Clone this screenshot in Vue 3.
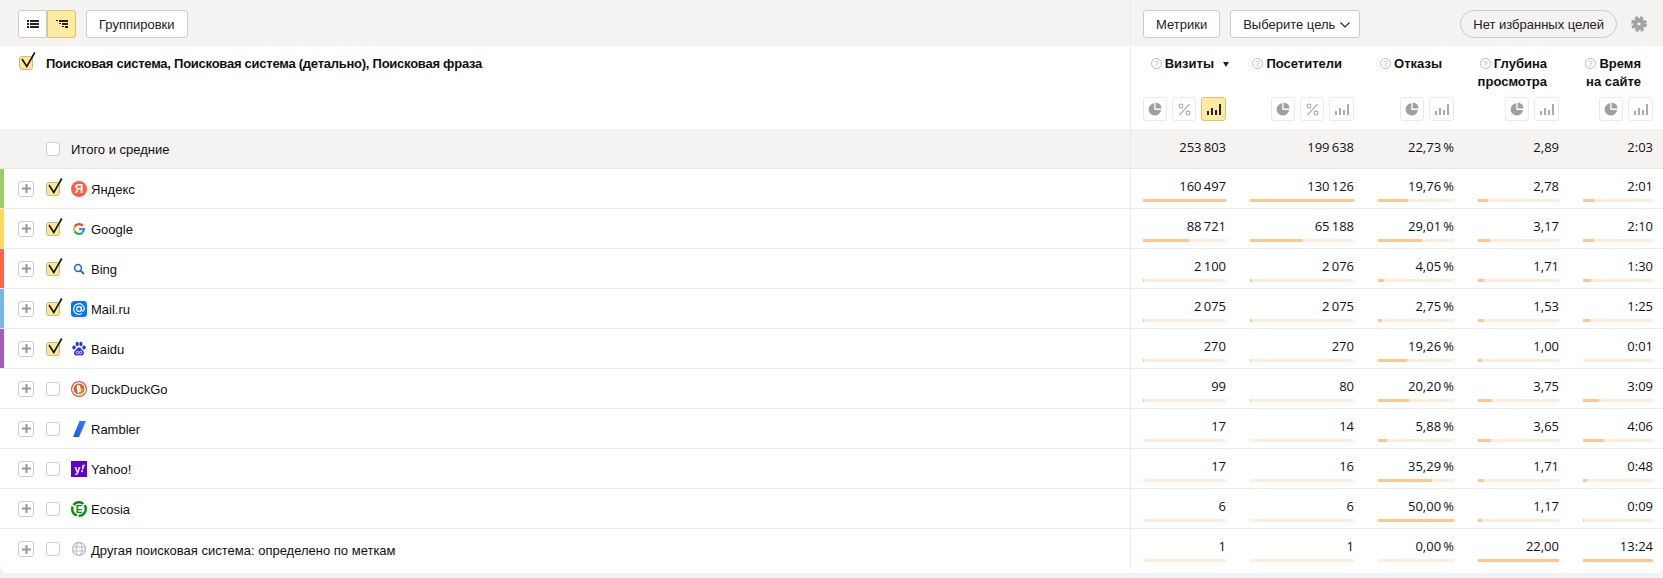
<script setup>
const columns = [
	{ title: ['Визиты'], sorted: true, buttons: ['pie', 'percent', 'bars-on'] },
	{ title: ['Посетители'], buttons: ['pie', 'percent', 'bars'] },
	{ title: ['Отказы'], buttons: ['pie', 'bars'] },
	{ title: ['Глубина', 'просмотра'], buttons: ['pie', 'bars'] },
	{ title: ['Время', 'на сайте'], buttons: ['pie', 'bars'] }
]

const totals = ['253 803', '199 638', '22,73 %', '2,89', '2:03']

const rows = [
	{ name: 'Яндекс', icon: 'yandex', color: '#9ccc65', checked: true, values: ['160 497', '130 126', '19,76 %', '2,78', '2:01'], bars: [100, 100, 39.5, 12.6, 15] },
	{ name: 'Google', icon: 'google', color: '#ffd75e', checked: true, values: ['88 721', '65 188', '29,01 %', '3,17', '2:10'], bars: [55.3, 50.1, 58, 14.4, 16.2] },
	{ name: 'Bing', icon: 'bing', color: '#ff6444', checked: true, values: ['2 100', '2 076', '4,05 %', '1,71', '1:30'], bars: [1.3, 1.6, 8.1, 7.8, 11.2] },
	{ name: 'Mail.ru', icon: 'mail', color: '#7ab5e8', checked: true, values: ['2 075', '2 075', '2,75 %', '1,53', '1:25'], bars: [1.3, 1.6, 5.5, 7, 10.6] },
	{ name: 'Baidu', icon: 'baidu', color: '#a65cbf', checked: true, values: ['270', '270', '19,26 %', '1,00', '0:01'], bars: [0.2, 0.2, 38.5, 4.5, 0.1] },
	{ name: 'DuckDuckGo', icon: 'duck', values: ['99', '80', '20,20 %', '3,75', '3:09'], bars: [0.1, 0.1, 40.4, 17, 23.5] },
	{ name: 'Rambler', icon: 'rambler', values: ['17', '14', '5,88 %', '3,65', '4:06'], bars: [0, 0, 11.8, 16.6, 30.6] },
	{ name: 'Yahoo!', icon: 'yahoo', values: ['17', '16', '35,29 %', '1,71', '0:48'], bars: [0, 0, 70.6, 7.8, 6] },
	{ name: 'Ecosia', icon: 'ecosia', values: ['6', '6', '50,00 %', '1,17', '0:09'], bars: [0, 0, 100, 5.3, 1.1] },
	{ name: 'Другая поисковая система: определено по меткам', icon: 'globe', values: ['1', '1', '0,00 %', '22,00', '13:24'], bars: [0, 0, 0, 100, 100] }
]

// числа в метрике разделены тонким пробелом
function thin(value) {
	return value.replace(' ', '\u2009')
}
</script>

<template>
	<div class="report">
		<div class="toolbar">
			<div class="toolbar-left">
				<div class="toggle">
					<button class="tbtn">
						<svg width="12" height="10" viewBox="0 0 12 10"><path d="M0 1h2v2H0zM3 1h9v2H3zM0 4h2v2H0zM3 4h9v2H3zM0 7h2v2H0zM3 7h9v2H3z" fill="#222" /></svg>
					</button>
					<button class="tbtn on">
						<svg width="12" height="10" viewBox="0 0 12 10"><path d="M0 1h2v1H0zM3 1h9v2H3zM3 4h2v1H3zM6 4h6v2H6zM6 7h2v1H6zM9 7h3v2H9z" fill="#222" /></svg>
					</button>
				</div>
				<button class="btn">Группировки</button>
			</div>
			<div class="toolbar-right">
				<button class="btn">Метрики</button>
				<button class="btn goal">
					Выберите цель
					<svg class="chevron" width="10" height="6" viewBox="0 0 10 6"><path d="M.5.5 5 5 9.500.5" fill="none" stroke="#222" stroke-width="1.100" /></svg>
				</button>
				<button class="pill">Нет избранных целей</button>
				<svg class="gear" width="16" height="16" viewBox="0 0 16 16">
					<circle cx="8" cy="8" r="6.300" fill="none" stroke="#a3a3a3" stroke-width="3.200" stroke-dasharray="3 2" />
					<circle cx="8" cy="8" r="3.800" fill="none" stroke="#a3a3a3" stroke-width="4.400" />
				</svg>
			</div>
		</div>

		<div class="grid head">
			<div class="left head-left">
				<span class="check on head-check">
					<svg class="tick" width="18" height="19" viewBox="0 0 18 19"><path d="M3 9 7.800 16.500 15.800 2.500" fill="none" stroke="#111" stroke-width="1.600" /></svg>
				</span>
				<b class="head-title">Поисковая система, Поисковая система (детально), Поисковая фраза</b>
			</div>
			<div v-for="col in columns" :key="col.title[0]" class="cell head-cell">
				<div class="label">
					<div class="label-text">
						<svg class="hint" width="11" height="11" viewBox="0 0 11 11">
							<circle cx="5.500" cy="5.500" r="5" fill="none" stroke="#bbb" />
							<text x="5.500" y="8.300" text-anchor="middle" font-size="8" fill="#aaa">?</text>
						</svg>
						<template v-for="(line, i) in col.title" :key="line"><br v-if="i > 0">{{ line }}</template>
					</div>
					<div class="sort">
						<svg v-if="col.sorted" width="6" height="5" viewBox="0 0 6 5"><path d="M0 0h6L3 5z" fill="#222" /></svg>
					</div>
				</div>
				<div class="chart-btns">
					<span v-for="b in col.buttons" :key="b" class="cbtn" :class="{ wide: b.startsWith('bars'), on: b === 'bars-on' }">
						<svg v-if="b === 'pie'" width="14" height="14" viewBox="0 0 14 14">
							<path d="M6.300 1.200A6.200 6.200 0 1 0 13 8H6.300z" fill="#a0a0a0" />
							<path d="M7.600 0.600A6 6 0 0 1 13.600 6.600H7.600z" fill="#a0a0a0" />
						</svg>
						<svg v-else-if="b === 'percent'" width="13" height="13" viewBox="0 0 13 13">
							<path d="M11.500 1 1.500 12" stroke="#999" stroke-width="1.100" />
							<circle cx="3" cy="3" r="2" fill="none" stroke="#999" />
							<circle cx="10" cy="10" r="2" fill="none" stroke="#999" />
						</svg>
						<svg v-else width="14" height="12" viewBox="0 0 14 12">
							<path d="M0 8h2v4H0zM4 5h2v7H4zM8 7h2v5H8zM12 1h2v11h-2z" :fill="b === 'bars-on' ? '#222' : '#aaa'" />
						</svg>
					</span>
				</div>
			</div>
		</div>

		<div class="grid total">
			<div class="left">
				<span class="expand-slot"></span>
				<span class="check"></span>
				<span class="name total-name">Итого и средние</span>
			</div>
			<div v-for="t in totals" :key="t" class="cell value-cell">
				<div class="value">{{ thin(t) }}</div>
			</div>
		</div>

		<div v-for="row in rows" :key="row.name" class="grid row">
			<div class="left" :style="{ borderLeftColor: row.color || 'transparent' }">
				<span class="expand">
					<svg width="9" height="9" viewBox="0 0 9 9"><path d="M3.500 0h2v3.500H9v2H5.500V9h-2V5.500H0v-2h3.500z" fill="#999" /></svg>
				</span>
				<span class="check" :class="{ on: row.checked }">
					<svg v-if="row.checked" class="tick" width="18" height="19" viewBox="0 0 18 19"><path d="M3 9 7.800 16.500 15.800 2.500" fill="none" stroke="#111" stroke-width="1.600" /></svg>
				</span>
				<svg class="favicon" width="16" height="16" viewBox="0 0 16 16">
					<template v-if="row.icon === 'yandex'">
						<circle cx="8" cy="8" r="8" fill="#fc5f45" />
						<text x="8" y="12.400" text-anchor="middle" font-size="12" font-weight="700" font-family="Liberation Sans" fill="#fff">Я</text>
					</template>
					<template v-else-if="row.icon === 'google'">
						<path d="M11.800 4.900A4.900 4.900 0 0 0 3.700 5.600" fill="none" stroke="#ea4335" stroke-width="2.200" />
						<path d="M3.700 5.600a4.900 4.900 0 0 0 0 4.800" fill="none" stroke="#fbbc05" stroke-width="2.200" />
						<path d="M3.700 10.400A4.900 4.900 0 0 0 11.500 11.400" fill="none" stroke="#34a853" stroke-width="2.200" />
						<path d="M11.500 11.400A4.900 4.900 0 0 0 12.900 8" fill="none" stroke="#4285f4" stroke-width="2.200" />
						<path d="M8 7h6v2.100H8z" fill="#4285f4" />
					</template>
					<template v-else-if="row.icon === 'bing'">
						<circle cx="7" cy="7" r="3.400" fill="none" stroke="#1a6fc4" stroke-width="1.500" />
						<path d="M9.500 9.500 13 13" stroke="#1a6fc4" stroke-width="1.800" />
					</template>
					<template v-else-if="row.icon === 'mail'">
						<rect width="16" height="16" rx="3.500" fill="#07f" />
						<circle cx="8" cy="8" r="2.400" fill="none" stroke="#fff" stroke-width="1.200" />
						<path d="M10.400 5.600v3.200c0 1.900 2.900 1.700 2.900-.8a5.300 5.300 0 1 0-2.200 4.300" fill="none" stroke="#fff" stroke-width="1.200" />
					</template>
					<template v-else-if="row.icon === 'baidu'">
						<ellipse cx="3" cy="6.500" rx="1.700" ry="2.100" fill="#2932e1" />
						<ellipse cx="6.200" cy="3" rx="1.600" ry="2.200" fill="#2932e1" />
						<ellipse cx="9.900" cy="3" rx="1.600" ry="2.200" fill="#2932e1" />
						<ellipse cx="13" cy="6.500" rx="1.700" ry="2.100" fill="#2932e1" />
						<path d="M8 6.500c-2 0-2.500 2-4 3.200-1.800 1.500-.8 5.300 2 4.800 1.300-.2 2.700-.2 4 0 2.800.5 3.800-3.300 2-4.800-1.500-1.200-2-3.200-4-3.200z" fill="#2932e1" />
						<circle cx="6.500" cy="11.500" r="1.300" fill="none" stroke="#fff" stroke-width=".8" />
						<circle cx="9.700" cy="11.500" r="1.300" fill="none" stroke="#fff" stroke-width=".8" />
					</template>
					<template v-else-if="row.icon === 'duck'">
						<circle cx="8" cy="8" r="7.400" fill="#fff" stroke="#de5833" stroke-width="1.200" />
						<circle cx="8" cy="8" r="5.400" fill="#de5833" />
						<path d="M6 4.500c2-1 3.500 0 3.500 2 0 1.500.5 3 .5 6H7C6.500 10 5 7 6 4.500z" fill="#fff" />
						<path d="M8.500 8h3.500v1.500H8.500z" fill="#fdd209" />
						<path d="M8 11h3v1.500H8z" fill="#65bc46" />
					</template>
					<template v-else-if="row.icon === 'rambler'">
						<defs>
							<linearGradient id="ramblerFill" x1="0" y1="1" x2="1" y2="0">
								<stop offset="0" stop-color="#0a5cff" />
								<stop offset="1" stop-color="#3d7bff" />
							</linearGradient>
						</defs>
						<path d="M8.500 0H15L8 16H2z" fill="url(#ramblerFill)" />
					</template>
					<template v-else-if="row.icon === 'yahoo'">
						<rect width="16" height="16" fill="#5f01d1" />
						<text x="6.500" y="12" text-anchor="middle" font-size="10.500" font-weight="700" font-family="Liberation Sans" fill="#fff">y</text>
						<path d="M11.500 4 14 3.500 12 8.500h-1.200z" fill="#fff" />
						<circle cx="11" cy="10.300" r="1" fill="#fff" />
					</template>
					<template v-else-if="row.icon === 'ecosia'">
						<circle cx="8" cy="8" r="6.800" fill="none" stroke="#0a8a12" stroke-width="2.400" stroke-dasharray="11 1.800" />
						<text x="8" y="11.600" text-anchor="middle" font-size="10" font-weight="700" font-family="Liberation Sans" fill="#0a8a12">E</text>
					</template>
					<template v-else>
						<circle cx="8" cy="8" r="6.500" fill="none" stroke="#b8bed0" stroke-width="1.300" />
						<ellipse cx="8" cy="8" rx="3" ry="6.500" fill="none" stroke="#b8bed0" stroke-width="1.100" />
						<path d="M1.500 6h13M1.500 10h13" stroke="#b8bed0" stroke-width="1.100" />
					</template>
				</svg>
				<span class="name">{{ row.name }}</span>
			</div>
			<div v-for="(v, i) in row.values" :key="i" class="cell value-cell">
				<div class="value">{{ thin(v) }}</div>
				<div class="bar">
					<div class="bar-fill" :style="{ width: row.bars[i] + '%' }"></div>
				</div>
			</div>
		</div>
	</div>
</template>

<style scoped>
.report {
	width: 1663px;
	height: 573px;
	background: #fff;
	border-radius: 0 0 8px 8px;
	font-family: "Liberation Sans", Arial, sans-serif;
	font-size: 13px;
	color: #111;
	overflow: hidden;
}

.toolbar {
	display: flex;
	height: 46px;
	background: #f4f3f1;
}

.toolbar-left {
	display: flex;
	align-items: center;
	gap: 10px;
	width: 1131px;
	padding: 2px 0 0 18px;
	box-sizing: border-box;
	border-right: 1px solid #eaeaea;
}

.toolbar-right {
	display: flex;
	flex: 1;
	align-items: center;
	gap: 10px;
	padding: 2px 16px 0 12px;
}

.btn,
.tbtn,
.pill {
	height: 28px;
	box-sizing: border-box;
	background: #fff;
	border: 1px solid #ccc;
	border-radius: 3px;
	font: 13px "Liberation Sans", Arial, sans-serif;
	color: #222;
	padding: 0 12px;
}

.goal {
	padding: 0 9px 0 12px;
}

.toggle {
	display: flex;
}

.tbtn {
	display: flex;
	align-items: center;
	justify-content: center;
	width: 29px;
	padding: 0;
	border-radius: 3px 0 0 3px;
}

.tbtn.on {
	background: #ffeba0;
	border-color: #d6c27e;
	border-radius: 0 3px 3px 0;
}

.chevron {
	margin-left: 1px;
	vertical-align: 1px;
}

.pill {
	margin-left: auto;
	background: transparent;
	border-radius: 14px;
}

.gear {
	margin-left: 4px;
}

.grid {
	display: grid;
	grid-template-columns: 1131px 107px 128px 100px 105px 92px;
}

.left {
	display: flex;
	align-items: center;
	box-sizing: border-box;
	padding-left: 14px;
	border-left: 4px solid transparent;
	border-right: 1px solid #eaeaea;
}

.head {
	height: 83px;
}

.head-left {
	align-items: flex-start;
	padding: 10px 0 0 15px;
}

.head-check {
	margin: 0;
}

.head-title {
	margin-left: 13px;
	line-height: 16px;
	letter-spacing: -0.25px;
}

.cell {
	padding: 0 12px;
	min-width: 0;
}

.cell:last-child {
	padding-right: 10px;
}

.head-cell {
	display: flex;
	flex-direction: column;
	justify-content: space-between;
	padding-top: 9px;
	padding-bottom: 8px;
}

.label {
	display: flex;
	justify-content: flex-end;
	font-weight: 700;
	line-height: 18px;
}

.label-text {
	text-align: right;
	white-space: nowrap;
}

.hint {
	margin-right: 3px;
	vertical-align: -1px;
	font-weight: 400;
}

.sort {
	display: flex;
	flex: none;
	justify-content: flex-end;
	align-items: center;
	width: 12px;
	height: 18px;
}

.sort svg {
	margin-right: -3px;
}

.chart-btns {
	display: flex;
	justify-content: flex-end;
	gap: 5px;
}

.cbtn {
	display: flex;
	align-items: center;
	justify-content: center;
	width: 24px;
	height: 24px;
	box-sizing: border-box;
	border: 1px solid #eaeaea;
	border-radius: 3px;
	background: #fff;
}

.cbtn.wide {
	width: 25px;
}

.cbtn.on {
	background: #ffeba0;
	border-color: #d6c27e;
}

.total,
.row {
	height: 40px;
	box-sizing: border-box;
	border-bottom: 1px solid #ebebeb;
}

.row:last-child {
	border-bottom: none;
}

.total {
	background: #f4f3f1;
	border-bottom-color: #e8e8e8;
}

.expand,
.expand-slot {
	display: flex;
	flex: none;
	align-items: center;
	justify-content: center;
	width: 16px;
	height: 16px;
	margin-right: 12px;
	box-sizing: border-box;
}

.expand {
	border: 1px solid #ccc;
	border-radius: 3px;
	background: #fff;
}

.check {
	position: relative;
	display: block;
	flex: none;
	width: 14px;
	height: 14px;
	box-sizing: border-box;
	border: 1px solid #ccc;
	border-radius: 3px;
	background: #fff;
}

.check.on {
	background: #ffe79a;
	border-color: #cdbb7e;
}

.tick {
	position: absolute;
	left: -1px;
	top: -7px;
}

.favicon {
	flex: none;
	margin-left: 11px;
}

.name {
	margin-left: 4px;
	padding-top: 2px;
	white-space: nowrap;
}

.total-name {
	margin-left: 11px;
}

.value-cell {
	display: flex;
	flex-direction: column;
	justify-content: center;
}

.total .value-cell {
	padding-bottom: 2px;
}

.row .value-cell {
	justify-content: flex-start;
	padding-top: 9px;
}

.value {
	font-family: "Open Sans", sans-serif;
	font-size: 13px;
	line-height: 17px;
	text-align: right;
	white-space: nowrap;
}

.bar {
	height: 3px;
	margin-top: 4px;
	background: #feeddc;
}

.bar-fill {
	height: 3px;
	background: #fdc78f;
}
</style>

<style>
body {
	background: #eef1f5;
}
</style>
